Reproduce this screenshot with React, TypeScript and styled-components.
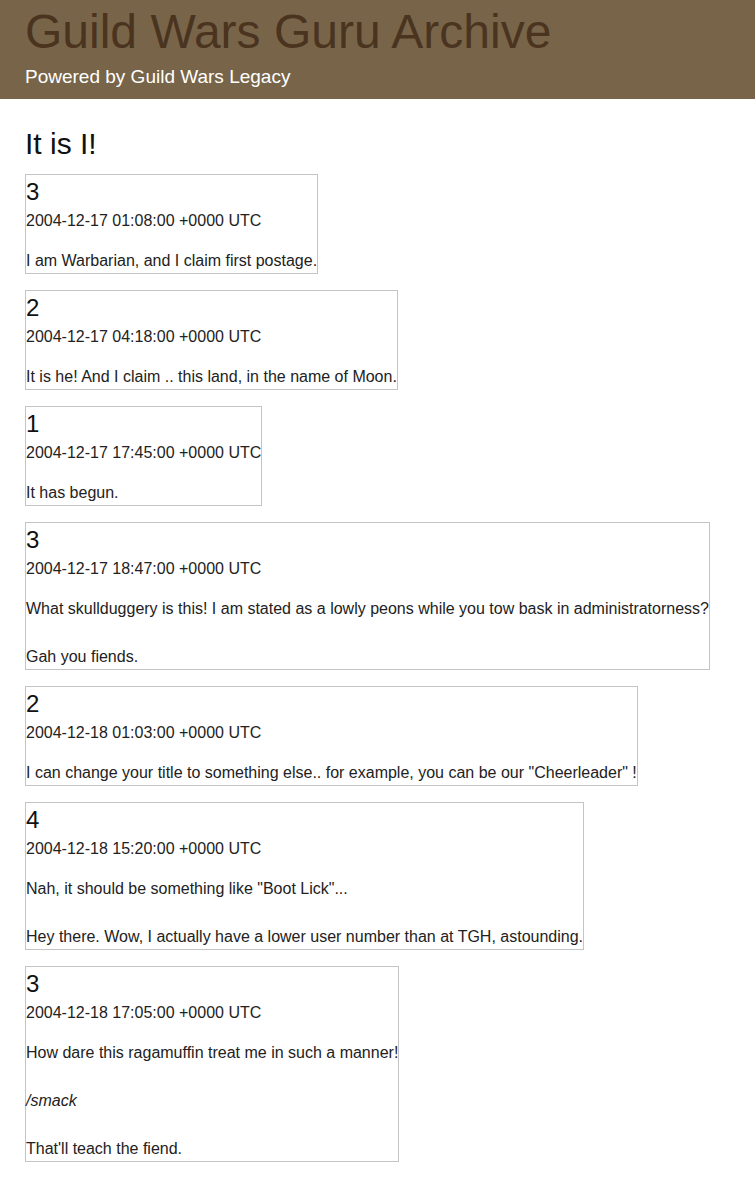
import React from "react";
import styled, { createGlobalStyle } from "styled-components";

const GlobalStyle = createGlobalStyle`
  html, body {
    margin: 0;
    padding: 0;
    background: #ffffff;
  }
  body {
    font-family: "Liberation Sans", Arial, Helvetica, sans-serif;
    font-size: 16px;
    line-height: 1.5;
    color: #222222;
  }
`;

const Header = styled.header`
  box-sizing: border-box;
  height: 99px;
  background: #786549;
  padding: 4px 25px 0;
`;

const SiteTitle = styled.div`
  font-size: 48px;
  line-height: 55px;
  color: #4a3420;
`;

const SiteSubtitle = styled.div`
  margin-top: 7px;
  font-size: 19px;
  line-height: 22px;
  color: #ffffff;
`;

const Main = styled.main`
  padding: 0 25px 16px;
`;

const ThreadTitle = styled.h1`
  margin: 28px 0 13px;
  font-size: 30px;
  font-weight: normal;
  line-height: 34px;
  color: #111111;
`;

const PostList = styled.div`
  display: flex;
  flex-direction: column;
  align-items: flex-start;
  gap: 16px;
`;

const Post = styled.article`
  border: 1px solid #c4c4c4;
  width: fit-content;
`;

const PostNumber = styled.div`
  font-size: 24px;
  line-height: 34px;
  color: #111111;
`;

const PostDate = styled.div`
  font-size: 16px;
  line-height: 24px;
`;

const PostBody = styled.div`
  margin-top: 16px;
  font-size: 16px;
  line-height: 24px;
  white-space: nowrap;
`;

type PostData = {
  num: string;
  date: string;
  body: React.ReactNode;
};

const posts: PostData[] = [
  {
    num: "3",
    date: "2004-12-17 01:08:00 +0000 UTC",
    body: <>I am Warbarian, and I claim first postage.</>,
  },
  {
    num: "2",
    date: "2004-12-17 04:18:00 +0000 UTC",
    body: <>It is he! And I claim .. this land, in the name of Moon.</>,
  },
  {
    num: "1",
    date: "2004-12-17 17:45:00 +0000 UTC",
    body: <>It has begun.</>,
  },
  {
    num: "3",
    date: "2004-12-17 18:47:00 +0000 UTC",
    body: (
      <>
        What skullduggery is this! I am stated as a lowly peons while you tow
        bask in administratorness?
        <br />
        <br />
        Gah you fiends.
      </>
    ),
  },
  {
    num: "2",
    date: "2004-12-18 01:03:00 +0000 UTC",
    body: (
      <>
        I can change your title to something else.. for example, you can be our
        "Cheerleader" !
      </>
    ),
  },
  {
    num: "4",
    date: "2004-12-18 15:20:00 +0000 UTC",
    body: (
      <>
        Nah, it should be something like "Boot Lick"...
        <br />
        <br />
        Hey there. Wow, I actually have a lower user number than at TGH,
        astounding.
      </>
    ),
  },
  {
    num: "3",
    date: "2004-12-18 17:05:00 +0000 UTC",
    body: (
      <>
        How dare this ragamuffin treat me in such a manner!
        <br />
        <br />
        <i>/smack</i>
        <br />
        <br />
        That'll teach the fiend.
      </>
    ),
  },
];

export default function App() {
  return (
    <>
      <GlobalStyle />
      <Header>
        <SiteTitle>Guild Wars Guru Archive</SiteTitle>
        <SiteSubtitle>Powered by Guild Wars Legacy</SiteSubtitle>
      </Header>
      <Main>
        <ThreadTitle>It is I!</ThreadTitle>
        <PostList>
          {posts.map((p, i) => (
            <Post key={i}>
              <PostNumber>{p.num}</PostNumber>
              <PostDate>{p.date}</PostDate>
              <PostBody>{p.body}</PostBody>
            </Post>
          ))}
        </PostList>
      </Main>
    </>
  );
}
